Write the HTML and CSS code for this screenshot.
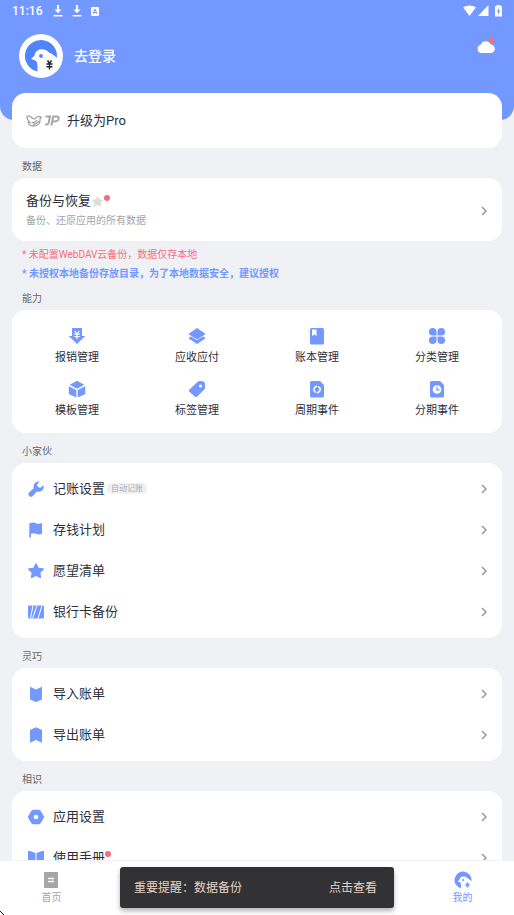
FILE: index.html
```html
<!DOCTYPE html>
<html lang="zh-CN">
<head>
<meta charset="utf-8">
<meta name="viewport" content="width=device-width, initial-scale=1">
<title>我的</title>
<link rel="stylesheet" href="styles.css">
</head>
<body>
<svg class="defs" aria-hidden="true">
  <symbol id="chevron" viewBox="0 0 8 10"><path d="M2 1l4 4-4 4" fill="none" stroke="#999" stroke-width="1.5"/></symbol>
  <symbol id="star" viewBox="0 0 16 16"><path d="M8 1l2.200 4.400 4.900.7-3.500 3.400.8 4.900L8 12.100l-4.400 2.300.8-4.900L.9 6.100l4.900-.7z" fill="currentColor" stroke="currentColor" stroke-width="1.500" stroke-linejoin="round"/></symbol>
  <symbol id="download" viewBox="0 0 10 12"><path d="M4 0h2v4.600H8.500L5 8.200 1.500 4.600H4zM.5 10h9v1.500h-9z" fill="#fff"/></symbol>
</svg>
<div class="app">
  <main class="content">
    <header class="header">
      <div class="status">
        <span class="time">11:16</span>
        <svg width="10" height="12"><use href="#download"/></svg>
        <svg width="10" height="12"><use href="#download"/></svg>
        <svg width="8" height="9" viewBox="0 0 8 9"><rect width="8" height="9" rx="1" fill="#fff"/><path d="M2 7l2-5 2 5M3 5.500h2" fill="none" stroke="#7398ff" stroke-width="1"/></svg>
        <span class="spacer"></span>
        <svg width="39" height="12" viewBox="0 0 39 12" fill="#fff"><path d="M0 2.300Q6.500-1.300 13 2.300L6.500 11zM25.500 0v11H15zM32 1.500Q32 1 32.500 1h1V0h4v1h1q.5 0 .5.500V11q0 .5-.5.500h-6Q32 11.500 32 11z"/><path d="M36 3L33.800 6.600h1.400V9.800L37.300 5.800H36z" fill="#7398ff"/></svg>
      </div>
      <div class="profile">
        <svg class="avatar" viewBox="0 0 44 44">
          <circle cx="22" cy="22" r="22" fill="#fff"/>
          <path d="M18.500 37.600A16 16 0 1 1 37.800 24C35.500 21.500 33 19.500 30 18.500 27.500 15.800 25 15 22 15.300 18 15.800 16 18.500 15.500 21.500L12 25Q16.500 25.500 18 28.500 18.600 31 18.500 37.600z" fill="#5084fa"/>
          <circle cx="22" cy="22" r="1.900" fill="#5084fa"/>
          <path d="M28.500 26.500l2 3 2-3M27.500 30h6M27.500 32.800h6M30.500 29.500v6" fill="none" stroke="#222" stroke-width="1.400"/>
        </svg>
        <a class="login" href="#login">去登录</a>
        <button class="cloud" aria-label="云备份">
          <svg width="20" height="18" viewBox="0 0 20 18"><path d="M5 16A4.200 4.200 0 0 1 4.800 7.800 5.200 5.200 0 0 1 14.600 7.400 4.300 4.300 0 0 1 14.500 16z" fill="#fff"/><circle cx="15.500" cy="3.500" r="2.800" fill="#f36f80"/></svg>
        </button>
      </div>
    </header>
    <a class="card pro" href="#pro">
      <svg width="34" height="12" viewBox="0 0 34 12" fill="none" stroke="#a5a5a5" stroke-width="1.300"><path d="M.7 1.500Q3 .2 5 2Q6.500 4 9 3.800 10.500 1.200 13 1.300L15.300 2.200 14 4Q14.500 10.800 7.500 11 2.500 10.500 2.200 7.200L4 7.500Q1.200 5 .7 1.500zM6 7.500Q9.500 8 11 5M7 9.500Q11 9 13 6"/><path d="M19.500 1.500h4.500L22.600 8Q22 10 19.200 9.500M25.500 10.500L27.200 1.500h4Q33.200 1.700 32.500 4.200 31.800 6.500 26.800 6.500" stroke-width="2"/></svg>
      <span>升级为Pro</span>
    </a>

    <h2 class="label">数据</h2>
    <a class="card backup" href="#backup">
      <span class="backup-text">
        <span class="backup-title">备份与恢复<svg class="mini-star"><use href="#star"/></svg><i class="dot"></i></span>
        <span class="sub">备份、还原应用的所有数据</span>
      </span>
      <svg class="chevron"><use href="#chevron"/></svg>
    </a>
    <div class="notes">
      <p class="warn">* 未配置WebDAV云备份，数据仅存本地</p>
      <p class="hint">* 未授权本地备份存放目录，为了本地数据安全，建议授权</p>
    </div>

    <h2 class="label after-notes">能力</h2>
    <nav class="card grid">
      <a href="#a"><svg viewBox="0 0 18 18"><path d="M4 1.500Q4 1 4.500 1h9Q14 1 14 1.500V9h3.300L9 17 .7 9H4z" fill="#7398ff"/><path d="M6.700 4L9 7l2.300-3M6.300 7.200h5.400M6.300 9.500h5.400M9 7v5" fill="none" stroke="#fff" stroke-width="1.200"/></svg>报销管理</a>
      <a href="#b"><svg viewBox="0 0 18 18"><path d="M9 1l8 5.500v1L9 12.500l-8-5v-1zM1 10.500L3 9.500l6 3.800 6-3.800 2 1v1.200L9 17l-8-5.300z" fill="#7398ff"/></svg>应收应付</a>
      <a href="#c"><svg viewBox="0 0 18 18"><rect x="2" y="1" width="14" height="16.500" rx="1.500" fill="#7398ff"/><path d="M4 2.500h4.500V9L6.300 7.500 4 9z" fill="#fff"/></svg>账本管理</a>
      <a href="#d"><svg viewBox="0 0 18 18" fill="#7398ff"><path d="M8.500 8.500H4.700A3.800 3.800 0 1 1 8.500 4.700zM9.500 8.500V4.700A3.800 3.800 0 1 1 13.300 8.500zM8.500 9.500v3.800A3.800 3.800 0 1 1 4.700 9.500zM9.500 9.500h3.800A3.800 3.800 0 1 1 9.500 13.300z"/></svg>分类管理</a>
      <a href="#e"><svg viewBox="0 0 18 18" fill="#7398ff"><path d="M9 .7l7.300 4L9 8.700l-7.300-4zM.8 6.200L8.300 10v7.500L.8 14zM17.200 6.200L9.700 10v7.500l7.500-3.500z"/></svg>模板管理</a>
      <a href="#f"><svg viewBox="0 0 18 18"><path d="M10 1.500Q10.500 1 11.500 1L15 1.300Q16.800 1.600 17 3.500V8Q17 8.700 16.500 9.200L9 16.800Q8 17.700 7 16.800L1.200 11.500Q.5 10.500 1.200 9.800z" fill="#7398ff"/><circle cx="12.500" cy="6" r="1.500" fill="#fff"/></svg>标签管理</a>
      <a href="#g"><svg viewBox="0 0 18 18"><path d="M3.500 1H12l4 4v11Q16 17.500 14.500 17.500h-11Q2 17.500 2 16V2.500Q2 1 3.500 1z" fill="#7398ff"/><path d="M9 6Q5.500 7.500 5.800 10.500L7.800 12.500M9 13Q12.500 11.500 12.200 8.500L10.200 6.500" fill="none" stroke="#fff" stroke-width="1.600"/></svg>周期事件</a>
      <a href="#h"><svg viewBox="0 0 18 18"><path d="M3.500 1H12l4 4v11Q16 17.500 14.500 17.500h-11Q2 17.500 2 16V2.500Q2 1 3.500 1z" fill="#7398ff"/><circle cx="9" cy="9.500" r="4.300" fill="#fff"/><path d="M9 6.800v3h2.500" fill="none" stroke="#7398ff" stroke-width="1.200"/></svg>分期事件</a>
    </nav>

    <h2 class="label">小家伙</h2>
    <nav class="card list">
      <a href="#i"><svg class="icon" viewBox="0 0 16 16"><path d="M11.500.6L8.800 4Q9.500 6.200 12 7L15.400 4.200Q16.500 7.500 13.800 9.700 11.500 11.200 9 10.500L4.500 15.200Q2.700 16.500 1.200 14.900-.2 13.300 1 11.500L5.700 7.300Q5 4.200 6.800 2 9-.2 11.500.6z" fill="#7398ff"/></svg><span>记账设置</span><span class="tag">自动记账</span><svg class="chevron"><use href="#chevron"/></svg></a>
      <a href="#j"><svg class="icon" viewBox="0 0 16 16"><path d="M1.300 1.500Q5-.5 8 1.200 10.500 2.300 14 1V11.800Q10.500 13 8 11.800 5.500 10.800 3 11.800V15.500H1.300z" fill="#7398ff"/></svg><span>存钱计划</span><svg class="chevron"><use href="#chevron"/></svg></a>
      <a href="#k"><svg class="icon"><use href="#star"/></svg><span>愿望清单</span><svg class="chevron"><use href="#chevron"/></svg></a>
      <a href="#l"><svg class="icon" viewBox="0 0 16 16"><rect y="1.500" width="16" height="13" rx="1" fill="#7398ff"/><path d="M5 1.500L2.500 14.500M9 1.500L4.500 14.500M14 1.500L10 14.500" stroke="#fff" stroke-width="1"/></svg><span>银行卡备份</span><svg class="chevron"><use href="#chevron"/></svg></a>
    </nav>

    <h2 class="label">灵巧</h2>
    <nav class="card list">
      <a href="#m"><svg class="icon" viewBox="0 0 16 16"><path d="M2 .8l6 2.700 6-2.700V13.500L8 16 2 13.500z" fill="#7398ff"/></svg><span>导入账单</span><svg class="chevron"><use href="#chevron"/></svg></a>
      <a href="#n"><svg class="icon" viewBox="0 0 16 16"><path d="M2 3l6-2.700L14 3v12.700L8 13l-6 2.700z" fill="#7398ff"/></svg><span>导出账单</span><svg class="chevron"><use href="#chevron"/></svg></a>
    </nav>

    <h2 class="label">相识</h2>
    <nav class="card list">
      <a href="#o"><svg class="icon" viewBox="0 0 16 16"><path d="M5.300.8h5.400q1.200 0 1.900 1L15.500 6.500q.8 1.500 0 3l-2.900 4.700q-.7 1-1.900 1H5.300q-1.200 0-1.900-1L.5 9.500q-.8-1.500 0-3l2.900-4.700q.7-1 1.900-1z" fill="#7398ff"/><circle cx="8" cy="8" r="2.300" fill="#fff"/></svg><span>应用设置</span><svg class="chevron"><use href="#chevron"/></svg></a>
      <a href="#p"><svg class="icon" viewBox="0 0 16 16"><path d="M0 1h2l5.500 2v13L0 13.500zM16 1h-2L8.500 3v13l7.500-2.500z" fill="#7398ff"/></svg><span>使用手册</span><i class="dot"></i><svg class="chevron"><use href="#chevron"/></svg></a>
    </nav>
  </main>

  <nav class="tabs">
    <a href="#home"><svg viewBox="0 0 18 18"><rect x="2" y="1" width="14" height="16" rx="1" fill="#a5a5a5"/><path d="M6 7.500h6M6 10.500h6" stroke="#fff" stroke-width="1.300"/></svg>首页</a>
    <a class="active" href="#me"><svg viewBox="0 0 18 18"><path d="M7 17.300A8.500 8.500 0 1 1 17.400 10.500C16.200 8.800 15 7.800 13.200 7 12 5.700 10.500 5.300 9 5.400 7 5.600 5.800 7 5.500 8.700L3.700 10.500Q6 10.700 6.800 12.300 7.200 14 7 17.300z" fill="#7398ff"/><circle cx="9" cy="9" r="1.100" fill="#7398ff"/><path d="M13.500 11.500v5M11.500 13.800h4" stroke="#7398ff" stroke-width="1.800"/></svg>我的</a>
  </nav>
  <div class="toast" role="status"><span>重要提醒：数据备份</span><button>点击查看</button></div>
  <svg class="pointer" width="4" height="4" viewBox="0 0 4 4" aria-hidden="true"><path d="M0 0h1v1h1v1h1v1h1v1H3V3H2V2H1V1H0z" fill="#111"/></svg>
</div>
</body>
</html>
```
FILE: styles.css
```css
* { box-sizing: border-box; }
body {
  margin: 0;
  background: #f0f1f5;
  color: #2c303b;
  font-family: Roboto, "Noto Sans CJK SC", sans-serif;
  font-size: 13px;
  line-height: 20px;
}
a { color: inherit; text-decoration: none; }
button { border: 0; padding: 0; background: none; color: inherit; font: inherit; }
svg { display: block; flex: none; }
.defs { position: absolute; width: 0; height: 0; }
.app { position: relative; display: flex; flex-direction: column; height: 100vh; overflow: hidden; }
.content { flex: 1; min-height: 0; overflow: hidden; }

.header { padding-bottom: 40px; background: #7398ff; border-radius: 0 0 14px 14px; color: #fff; }
.status { display: flex; align-items: center; gap: 9px; height: 22px; padding: 0 12px; }
.time { margin-right: 2px; font-size: 12px; font-weight: 500; }
.spacer { flex: 1; }
.profile { display: flex; align-items: center; padding: 12px 18px 2px 19px; }
.avatar { width: 44px; height: 44px; }
.login { flex: 1; margin-left: 11px; font-size: 14px; font-weight: 500; }
.cloud { align-self: flex-start; padding-top: 3px; }

.card { margin: 0 12px; background: #fff; border-radius: 14px; }
.pro { display: flex; align-items: center; gap: 7px; height: 55px; margin-top: -27px; padding: 0 14px; }
.label { margin: 0; padding: 11px 22px 3px; color: #666; font-size: 10px; font-weight: 400; line-height: 16px; }
.after-notes { padding-top: 8px; }
.backup { display: flex; align-items: center; justify-content: space-between; padding: 13px 14px 10px; }
.backup-text { display: grid; }
.backup-title { display: flex; align-items: center; }
.mini-star { width: 11px; height: 11px; margin: 0 1px; color: #ddd; }
.dot { align-self: flex-start; width: 6px; height: 6px; margin-top: 4px; border-radius: 50%; background: #f36f80; }
.sub { color: #a5a5a5; font-size: 10px; }
.chevron { width: 8px; height: 10px; }
.notes { padding: 4px 22px 0; font-size: 10px; line-height: 19px; }
.notes p { margin: 0; }
.warn { color: #f36f80; }
.hint { color: #7398ff; font-weight: 700; }

.grid { display: grid; grid-template-columns: repeat(4, 1fr); row-gap: 13px; padding: 17px 5px 13px; }
.grid a { display: flex; flex-direction: column; align-items: center; gap: 4px; font-size: 11px; line-height: 18px; }
.grid svg, .tabs svg { width: 18px; height: 18px; }

.list { padding: 5px 14px 6px; }
.list a { display: flex; align-items: center; height: 41px; }
.list .icon { width: 16px; height: 16px; margin: 0 9px 0 2px; color: #7398ff; }
.list .chevron { margin-left: auto; }
.list .dot { margin-top: 14px; }
.tag { margin-left: 2px; padding: 0 4px; border-radius: 4px; background: #f0f1f5; color: #aaa; font-size: 8px; line-height: 11px; }

.tabs { display: flex; justify-content: space-between; height: 55px; background: #fff; border-top: 1px solid #f3f3f5; }
.tabs a { display: flex; flex-direction: column; align-items: center; width: 20%; padding-top: 10px; color: #a5a5a5; font-size: 10px; line-height: 18px; }
.tabs .active { color: #7398ff; }
.toast { position: absolute; bottom: 7px; left: 120px; right: 120px; display: flex; align-items: center; justify-content: space-between; height: 41px; padding: 0 17px 0 14px; border-radius: 3px; background: #323234; color: #e8d2c9; font-size: 12px; box-shadow: 0 3px 5px rgba(0, 0, 0, .3); }
.pointer { position: absolute; left: 0; bottom: 0; }
```
